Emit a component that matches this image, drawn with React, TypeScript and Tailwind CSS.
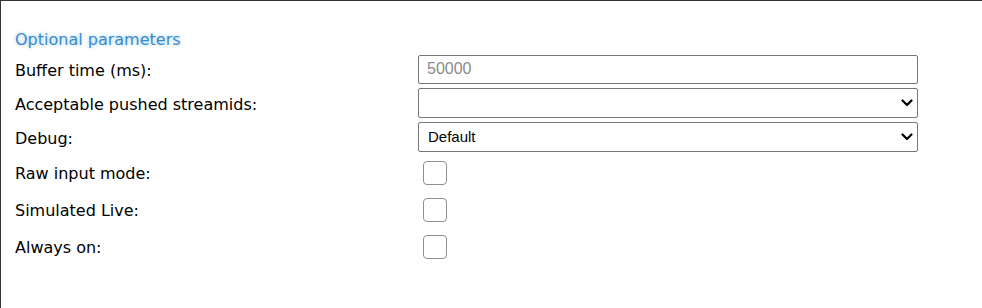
import { useState } from 'react'

function Chevron() {
  return (
    <svg
      className="pointer-events-none absolute right-[5px] top-1/2 -translate-y-1/2"
      width="12"
      height="8"
      viewBox="0 0 12 8"
      fill="none"
    >
      <path d="M1.5 1.5 6 6l4.5-4.5" stroke="#000" strokeWidth="2.2" strokeLinecap="round" strokeLinejoin="round" />
    </svg>
  )
}

function Row({ label, h, children }: { label: string; h: string; children: React.ReactNode }) {
  return (
    <div className={`flex items-center ${h}`}>
      <label className="w-[403px] shrink-0 pt-[3px]">{label}</label>
      {children}
    </div>
  )
}

export default function App() {
  const [buffer, setBuffer] = useState('')
  const [streamids, setStreamids] = useState('')
  const [debug, setDebug] = useState('default')
  const [flags, setFlags] = useState({ raw: false, live: false, always: false })

  const toggle = (k: keyof typeof flags) => setFlags({ ...flags, [k]: !flags[k] })

  const selectCls =
    'h-[30px] w-[500px] appearance-none rounded-[2px] border border-[#767676] bg-white pl-[9px] pr-6 text-[15px] text-black outline-none'

  return (
    <div
      className="h-[308px] w-[982px] border-t border-l border-[#333] bg-white pt-[29px] pl-[14px] text-[16px] text-[#000]"
      style={{ fontFamily: '"DejaVu Sans", sans-serif' }}
    >
      <h3 className="h-[22px] leading-[20px] text-[#3a8bcc] [text-shadow:0_0_4px_rgba(58,139,204,0.45)]">
        Optional parameters
      </h3>

      <Row label="Buffer time (ms):" h="h-[34px]">
        <input
          type="text"
          value={buffer}
          onChange={(e) => setBuffer(e.target.value)}
          placeholder="50000"
          className="h-[29px] w-[500px] rounded-[2px] border border-[#767676] px-[8px] text-[16px] text-black outline-none placeholder:text-[#8a8a8a]"
          style={{ fontFamily: '"Liberation Sans", Arial, sans-serif' }}
        />
      </Row>

      <Row label="Acceptable pushed streamids:" h="h-[34px]">
        <div className="relative">
          <select
            value={streamids}
            onChange={(e) => setStreamids(e.target.value)}
            className={selectCls}
            style={{ fontFamily: '"Liberation Sans", Arial, sans-serif' }}
          >
            <option value=""></option>
          </select>
          <Chevron />
        </div>
      </Row>

      <Row label="Debug:" h="h-[34px]">
        <div className="relative">
          <select
            value={debug}
            onChange={(e) => setDebug(e.target.value)}
            className={selectCls}
            style={{ fontFamily: '"Liberation Sans", Arial, sans-serif' }}
          >
            <option value="default">Default</option>
          </select>
          <Chevron />
        </div>
      </Row>

      {([
        ['raw', 'Raw input mode:'],
        ['live', 'Simulated Live:'],
        ['always', 'Always on:'],
      ] as const).map(([k, label]) => (
        <Row key={k} label={label} h="h-[37px]">
          <button
            type="button"
            onClick={() => toggle(k)}
            className="ml-[5px] flex h-[24px] w-[24px] items-center justify-center rounded-[4px] border border-[#8f8f8f] bg-white"
          >
            {flags[k] && <span className="text-[14px] leading-none">✓</span>}
          </button>
        </Row>
      ))}
    </div>
  )
}
